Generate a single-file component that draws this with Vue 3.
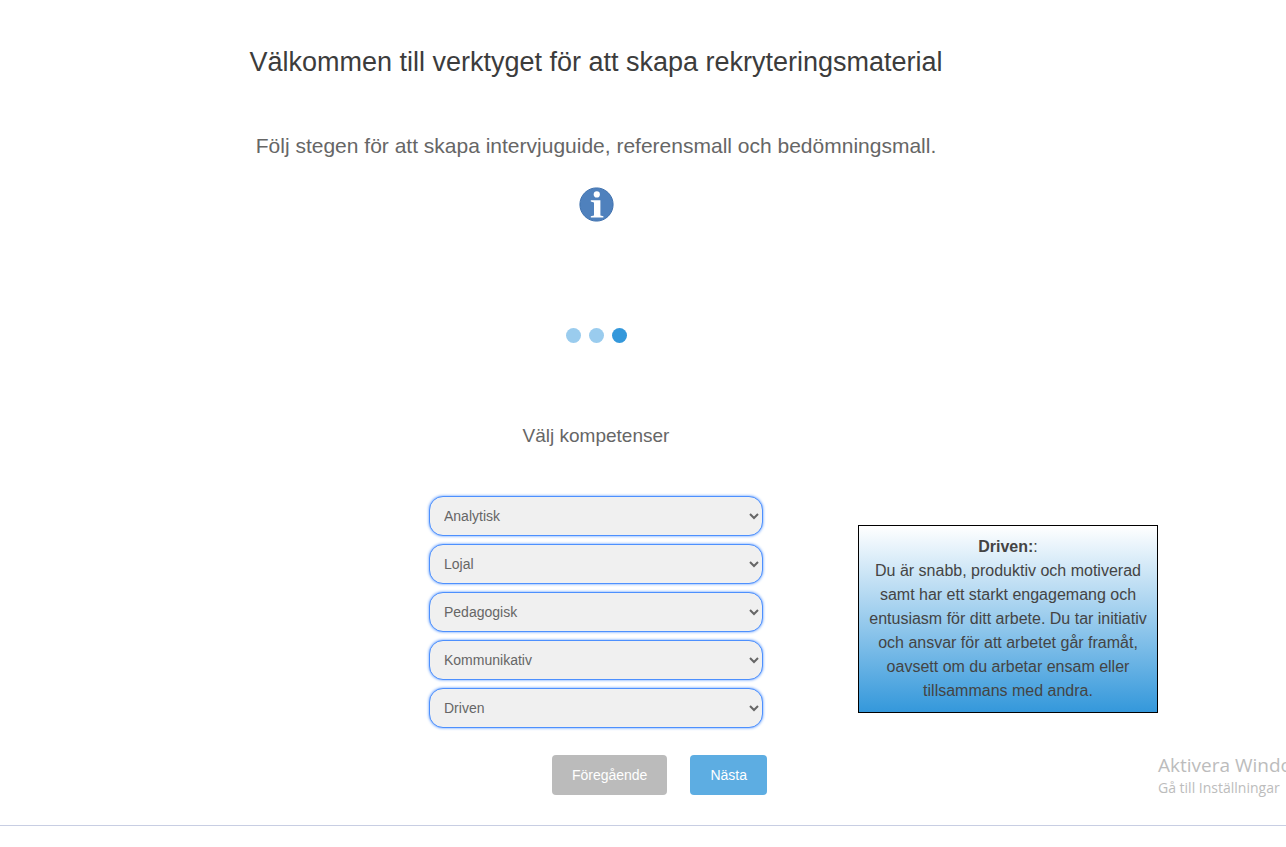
<script setup>
import { ref } from 'vue'

const options = ['Analytisk', 'Lojal', 'Pedagogisk', 'Kommunikativ', 'Driven']
const chosen = ref([...options])
const steps = [1, 2, 3]
const current = 3
</script>

<template>
  <div class="page">
    <main class="wizard">
      <h1>Välkommen till verktyget för att skapa rekryteringsmaterial</h1>
      <p class="intro">Följ stegen för att skapa intervjuguide, referensmall och bedömningsmall.</p>
      <button type="button" class="info" aria-label="Information">
        <svg viewBox="0 0 35 35" width="35" height="35" aria-hidden="true">
          <circle cx="17.5" cy="17.5" r="16.6" fill="#4f81bd" stroke="#3f71ae" stroke-width="1" />
          <circle cx="17.8" cy="7.4" r="3.1" fill="#fff" />
          <path d="M11.8 13.2H21.4V28.4L24.4 29.2V30.4H11.8V29.2L15 28.4V15.4L11.8 14.5Z" fill="#fff" />
        </svg>
      </button>
      <div class="dots">
        <span v-for="s in steps" :key="s" class="dot" :class="{ active: s === current }"></span>
      </div>
      <h2>Välj kompetenser</h2>
      <div class="columns">
        <div class="fields">
          <select v-for="(c, i) in chosen" :key="i" v-model="chosen[i]" :aria-label="'Kompetens ' + (i + 1)">
            <option v-for="o in options" :key="o">{{ o }}</option>
          </select>
        </div>
        <aside class="description">
          <strong>Driven:</strong>:<br />
          Du är snabb, produktiv och motiverad samt har ett starkt engagemang och entusiasm för ditt
          arbete. Du tar initiativ och ansvar för att arbetet går framåt, oavsett om du arbetar ensam
          eller tillsammans med andra.
        </aside>
      </div>
      <div class="actions">
        <button type="button" class="action previous">Föregående</button>
        <button type="button" class="action next">Nästa</button>
      </div>
    </main>
    <div class="activation">
      <div class="activation-title">Aktivera Windows</div>
      <div class="activation-text">Gå till Inställningar</div>
    </div>
  </div>
</template>

<style>
body {
  margin: 0;
  background: #fff;
}
</style>

<style scoped>
.page {
  position: relative;
  overflow: hidden;
  box-sizing: border-box;
  padding: 42px 94px 30px 0;
  border-bottom: 1px solid #c8cee3;
  box-shadow: 0 1px 5px #c8cee3;
  font-family: Arial, "Liberation Sans", sans-serif;
  color: #666;
}
.wizard {
  display: flex;
  flex-direction: column;
  align-items: center;
}
h1 {
  margin: 0;
  font-size: 27px;
  line-height: 40px;
  font-weight: 400;
  color: #3c3c3c;
}
.intro {
  margin: 49px 0 0;
  font-size: 21px;
  line-height: 30px;
}
.info {
  display: block;
  margin: 26px 0 0;
  padding: 0;
  border: 0;
  background: none;
}
.info svg {
  display: block;
}
.dots {
  display: flex;
  gap: 8px;
  margin-top: 106px;
}
.dot {
  width: 15px;
  height: 15px;
  border-radius: 50%;
  background: #9accee;
}
.dot.active {
  background: #3498db;
}
h2 {
  margin: 81px 0 0;
  font-size: 19px;
  line-height: 24px;
  font-weight: 400;
}
.columns {
  display: grid;
  grid-template-columns: 1fr 334px 1fr;
  width: 100%;
  margin-top: 48px;
}
.fields {
  grid-column: 2;
  display: flex;
  flex-direction: column;
  gap: 8px;
}
select {
  width: 100%;
  height: 40px;
  margin: 0;
  padding: 0 0 0 10px;
  border: 1px solid #4d90fe;
  border-radius: 14px;
  background-color: #f0f0f0;
  box-shadow: 0 0 3px #4d90fe;
  font-family: inherit;
  font-size: 14px;
  color: #666;
}
.description {
  box-sizing: border-box;
  width: 300px;
  margin: 29px 0 0 95px;
  align-self: start;
  padding: 9px 10px;
  border: 1px solid #000;
  background: linear-gradient(#fff, #3498db);
  font-size: 16px;
  line-height: 24px;
  text-align: center;
  color: #444;
}
.actions {
  display: flex;
  gap: 23px;
  width: 334px;
  justify-content: flex-end;
  margin: 27px 0 0 8px;
}
.action {
  height: 40px;
  padding: 0 20px;
  border: 0;
  border-radius: 4px;
  font-family: inherit;
  font-size: 14px;
  color: #fff;
}
.previous {
  background: #bbb;
}
.next {
  background: #5dade2;
}
.activation {
  position: absolute;
  left: calc(100% - 128px);
  bottom: 27px;
  white-space: nowrap;
  font-family: "Segoe UI", "Open Sans", sans-serif;
  color: #bcbcbc;
}
.activation-title {
  font-size: 19px;
  line-height: 26px;
}
.activation-text {
  font-size: 14px;
  line-height: 20px;
}
</style>
